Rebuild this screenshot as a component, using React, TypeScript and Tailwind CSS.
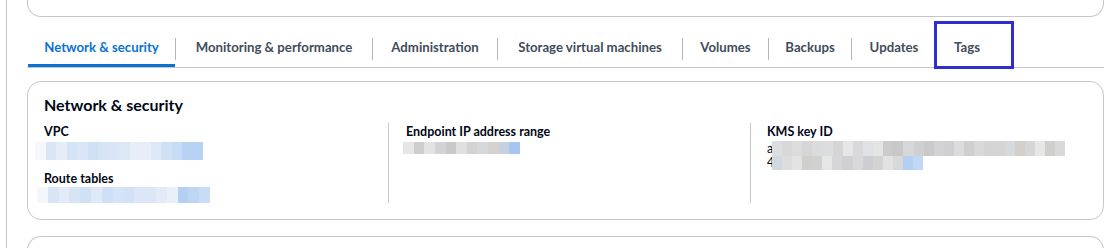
import React from 'react';

const tabs = [
  { label: 'Network & security', w: 'w-[147px]', active: true },
  { label: 'Monitoring & performance', w: 'w-[196px]' },
  { label: 'Administration', w: 'w-[124px]' },
  { label: 'Storage virtual machines', w: 'w-[184px]' },
  { label: 'Volumes', w: 'w-[85px]' },
  { label: 'Backups', w: 'w-[82px]' },
  { label: 'Updates', w: 'w-[84px]' },
  { label: 'Tags', w: 'w-[60px]' },
];

const vpc = [
  '#f5f7fc', '#d9e6f6', '#e5edf9', '#d4e3f5', '#d9e6f7', '#d0e0f5', '#d6e4f6', '#dae6f7',
  '#dde8f7', '#e7eef9', '#e7eef9', '#dce7f7', '#cfe0f5', '#c8dbf4', '#b7d1f2', '#b7d1f2',
];
const routes = [
  '#f3f6fc', '#d8e5f6', '#e3ebf8', '#d6e4f6', '#d0e0f5', '#dfe9f7', '#cfdff5', '#d4e3f6',
  '#d2e1f5', '#dbe7f7', '#dbe7f7', '#e3ebf8', '#eaf0fa', '#b3cff2', '#bdd6f3', '#c8dcf5',
];
const endpoint = [
  '#e6e6e7', '#cdcdcf', '#e2e3e3', '#d3d3d5', '#c9c9cc', '#dfe0e0', '#d5d3d2', '#d6d8db',
  '#d4d2d0', '#c5d1e0', '#a4c6f0',
];
const kms1 = [
  '#dcdfe2', '#d8d8da', '#dcdcdc', '#d6d6d8', '#dadbdd', '#dcdddf', '#d5d5d4', '#e6e6e6',
  '#d9d9db', '#e0e1e3', '#e4e4e4', '#cbcbcc', '#c8c8ca', '#d6d7d9', '#d0d0d2', '#c9c9cb',
  '#d3d3d5', '#d0d0d2', '#dcdcdc', '#cfcfd0', '#d9d9da', '#d4d4d6', '#d5d5d6', '#d7dadd',
  '#d3d0cc', '#d6d6d8', '#e7e7e7', '#cfcfcd', '#d9d9db',
];
const kms2 = [
  '#d1d9e0', '#dedcdb', '#e3e3e3', '#cfcfcc', '#d1d1d1', '#e6e6e4', '#d6d6d8', '#cfd0d4',
  '#d8d8da', '#ccced3', '#d3d3d3', '#e2e2e3', '#d8d8d9', '#b3cff2', '#bfd8f4',
];

const Pixels = ({ colors, className }: { colors: string[]; className: string }) => (
  <div className={`flex ${className}`}>
    {colors.map((c, i) => (
      <span key={i} className="flex-1" style={{ backgroundColor: c }} />
    ))}
  </div>
);

const Label = ({ children }: { children: React.ReactNode }) => (
  <div className="text-[12.5px] font-bold leading-[17px] text-[#000716]">{children}</div>
);

export default function App() {
  return (
    <div
      className="relative flex h-[248px] w-[1105px] overflow-hidden bg-white"
      style={{ fontFamily: 'Lato, "Liberation Sans", sans-serif' }}
    >
      <div className="ml-[6px] w-px shrink-0 bg-[#c6c6cd]" />
      <div className="flex flex-1 flex-col pl-[20px] pr-[1px]">
        {/* previous container, only its bottom is in view */}
        <div className="h-[17px] shrink-0 rounded-b-[14px] border border-t-0 border-[#c6c6cd]" />

        {/* tabs */}
        <div className="mt-[14px] flex items-center border-b border-[#c6c6cd] pl-px">
          {tabs.map((t, i) => (
            <React.Fragment key={t.label}>
              {i > 0 && <div className="h-[22px] w-px shrink-0 bg-[#b4b4bb]" />}
              <div
                className={`flex h-[36px] shrink-0 items-center justify-center border-b-[3px] text-[13.2px] font-bold ${t.w} ${
                  t.active ? 'border-[#0972d3] text-[#0972d3]' : 'border-transparent text-[#414d5c]'
                }`}
              >
                {t.label}
              </div>
            </React.Fragment>
          ))}
        </div>

        {/* network & security container */}
        <div className="mt-[13px] h-[139px] shrink-0 rounded-[14px] border border-[#c6c6cd] px-[16px] pt-[12px]">
          <h2 className="text-[16px] font-bold leading-[22px] text-[#000716]">Network &amp; security</h2>
          <div className="mt-[7px] grid h-[80px] grid-cols-[344px_362px_1fr]">
            <div className="flex flex-col">
              <Label>VPC</Label>
              <Pixels colors={vpc} className="ml-[-9px] mt-[2px] h-[18px] w-[168px]" />
              <div className="mt-[10px]">
                <Label>Route tables</Label>
              </div>
              <Pixels colors={routes} className="ml-[-7px] h-[16px] w-[173px]" />
            </div>
            <div className="flex flex-col border-l border-[#c6c6cd] pl-[17px]">
              <Label>Endpoint IP address range</Label>
              <Pixels colors={endpoint} className="ml-[-3px] mt-[2px] h-[12px] w-[117px]" />
            </div>
            <div className="flex flex-col border-l border-[#c6c6cd] pl-[16px]">
              <Label>KMS key ID</Label>
              <div className="mt-px flex h-[15px] items-center">
                <span className="w-[5px] overflow-hidden text-[12.5px] leading-[15px] text-[#000716]">a</span>
                <Pixels colors={kms1} className="h-[15px] w-[293px]" />
              </div>
              <div className="flex h-[14px] items-center">
                <span className="w-[5px] overflow-hidden text-[12.5px] leading-[14px] text-[#000716]">4</span>
                <Pixels colors={kms2} className="h-[14px] w-[151px]" />
              </div>
            </div>
          </div>
        </div>

        {/* next container, only its top is in view */}
        <div className="mt-[16px] h-[30px] shrink-0 rounded-t-[14px] border border-b-0 border-[#c6c6cd]" />
      </div>

      {/* highlight box drawn over the Tags tab */}
      <div className="pointer-events-none absolute left-[934px] top-[21px] h-[48px] w-[80px] border-[3px] border-[#2e2ecf]" />
    </div>
  );
}
